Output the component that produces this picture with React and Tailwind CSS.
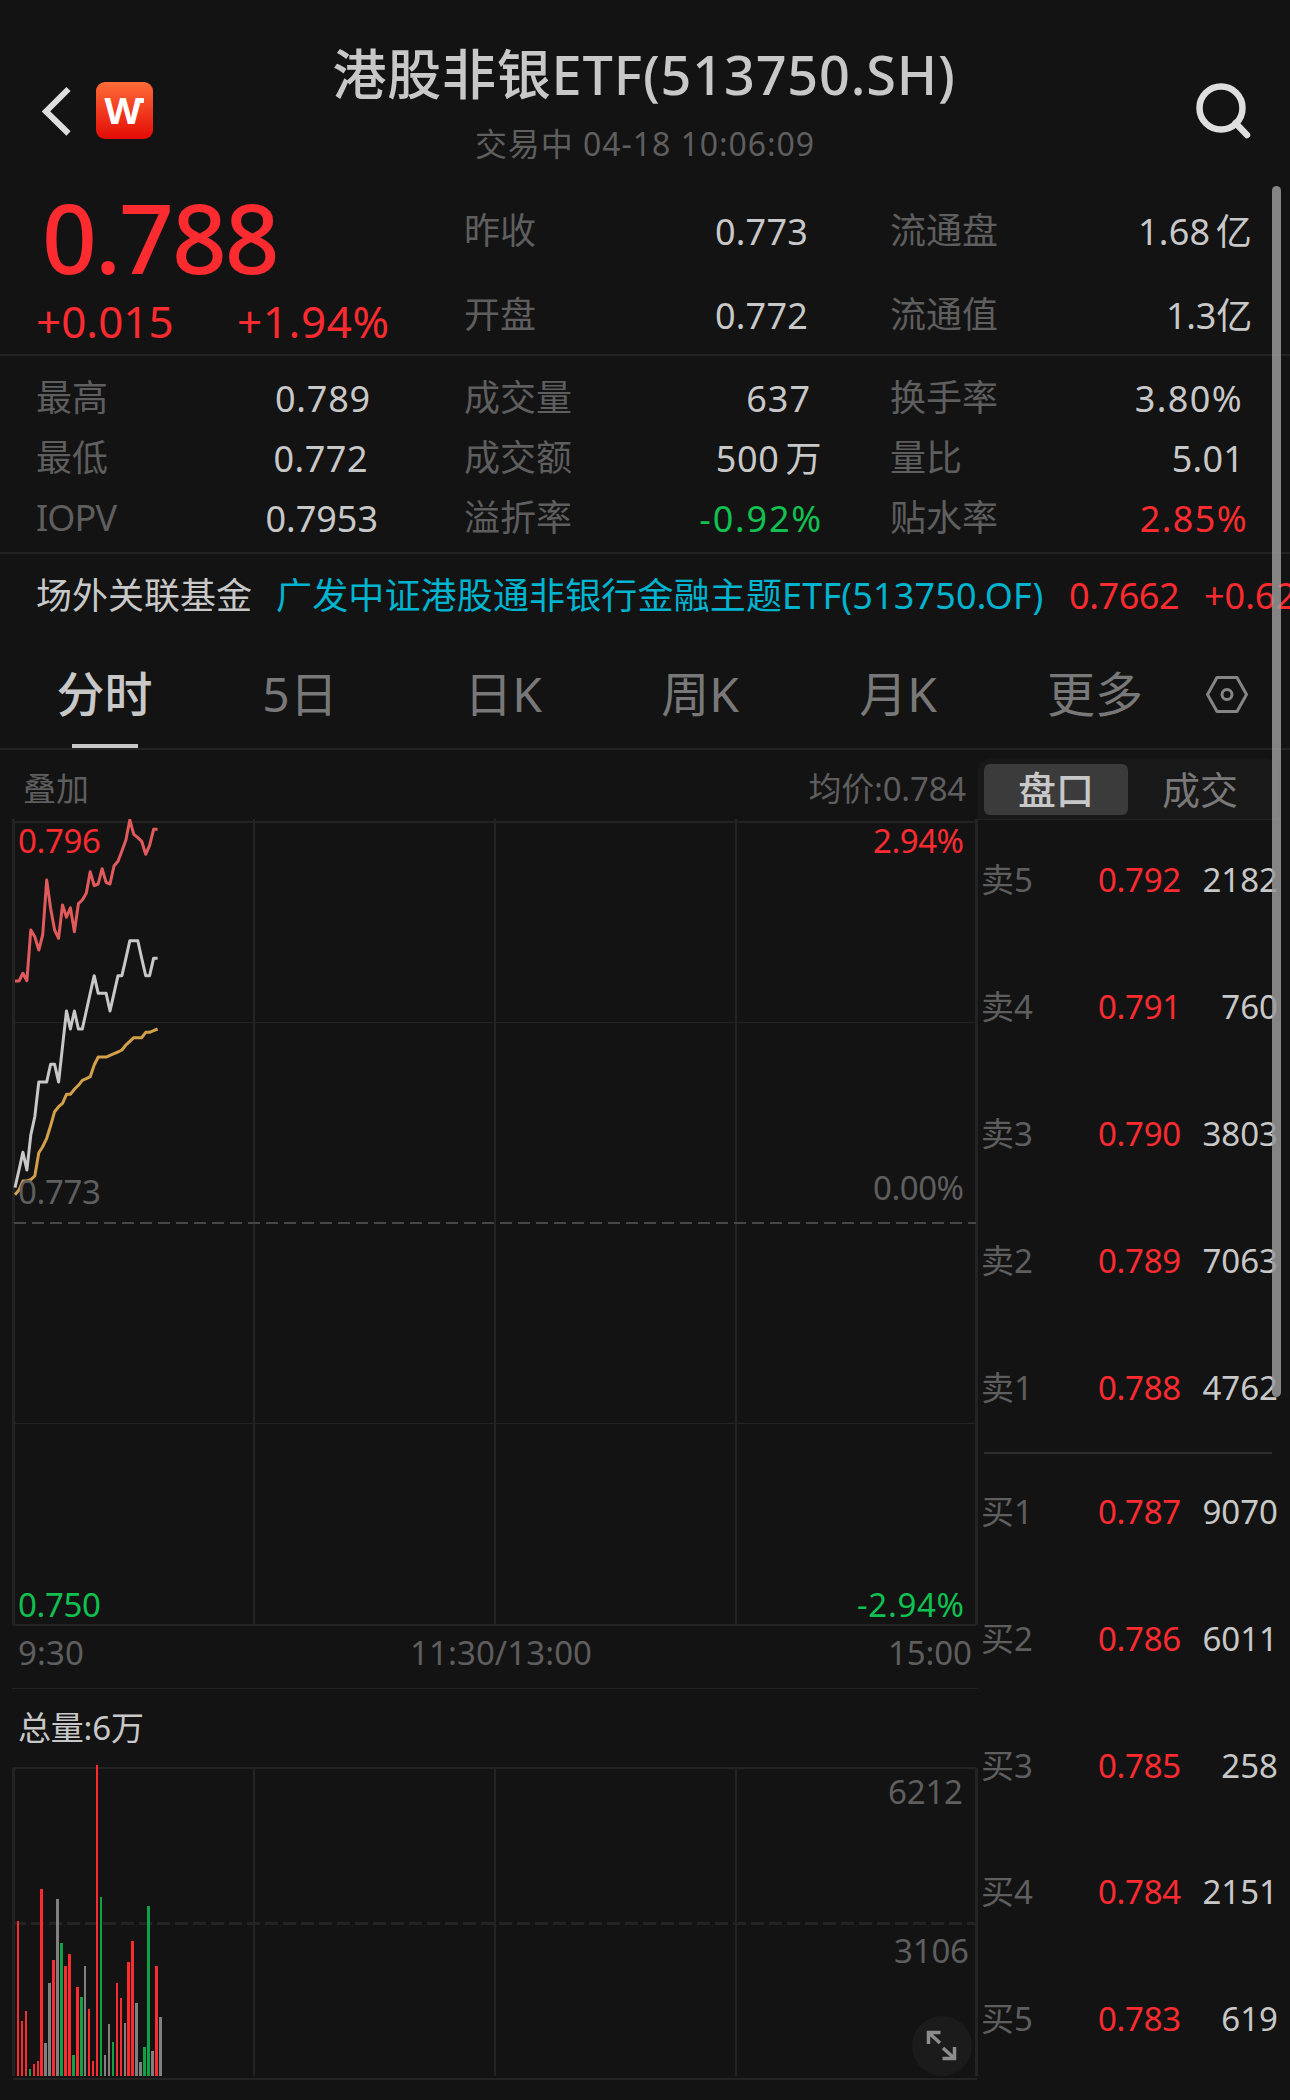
import { useState } from 'react';

const topStats = [
  { label: '昨收', value: '0.773', cls: 'pr-[82px] tracking-[0.2px]' },
  { label: '流通盘', value: '1.68 亿', cls: 'pr-[38px] tracking-[0.2px]' },
  { label: '开盘', value: '0.772', cls: 'pr-[82px] tracking-[0.2px]' },
  { label: '流通值', value: '1.3亿', cls: 'pr-[38px] tracking-[-0.2px]' },
];

const stats = [
  { label: '最高', value: '0.789', cls: 'pr-[93px] tracking-[0.8px]' },
  { label: '成交量', value: '637', cls: 'pr-[79px] tracking-[1px]' },
  { label: '换手率', value: '3.80%', cls: 'pr-[47px] tracking-[1.4px]' },
  { label: '最低', value: '0.772', cls: 'pr-[96px] tracking-[0.5px]' },
  { label: '成交额', value: '500 万', cls: 'pr-[68px] tracking-[0.6px]' },
  { label: '量比', value: '5.01', cls: 'pr-[46px] tracking-[0.2px]' },
  { label: 'IOPV', value: '0.7953', cls: 'pr-[86px]' },
  { label: '溢折率', value: '-0.92%', cls: 'pr-[67px] tracking-[1.8px]', color: 'text-[#10c050]' },
  { label: '贴水率', value: '2.85%', cls: 'pr-[42px] tracking-[1.4px]', color: 'text-[#fb2b30]' },
];

const tabs = [
  { name: '分时', cls: 'w-[209px]' },
  { name: '5日', cls: 'w-[182px]' },
  { name: '日K', cls: 'w-[224px]' },
  { name: '周K', cls: 'w-[170px]' },
  { name: '月K', cls: 'w-[226px]' },
  { name: '更多', cls: 'w-[168px]' },
];

const asks = [
  ['卖5', '0.792', 2182],
  ['卖4', '0.791', 760],
  ['卖3', '0.790', 3803],
  ['卖2', '0.789', 7063],
  ['卖1', '0.788', 4762],
];

const bids = [
  ['买1', '0.787', 9070],
  ['买2', '0.786', 6011],
  ['买3', '0.785', 258],
  ['买4', '0.784', 2151],
  ['买5', '0.783', 619],
];

// one sample per minute, y offsets from the top of the plot (1/3 px units)
const overlayLine = [
  486, 486, 463, 485, 333, 353, 393, 348, 183, 268, 333, 358, 258, 295, 266, 338, 254, 243, 223,
  158, 200, 195, 149, 190, 195, 141, 127, 96, 63, 3, 46, 56, 67, 106, 79, 31, 31,
];
const priceLine = [
  1106, 1053, 1000, 1053, 948, 893, 789, 789, 789, 736, 736, 789, 683, 576, 630, 576, 630, 630, 576,
  523, 470, 523, 523, 523, 576, 523, 470, 470, 418, 365, 365, 365, 418, 470, 470, 418, 418,
];
const avgLine = [
  1127, 1113, 1086, 1086, 1082, 1071, 1001, 983, 958, 920, 878, 863, 853, 826, 826, 811, 799, 784, 779,
  773, 738, 714, 714, 714, 709, 704, 699, 693, 678, 667, 656, 656, 656, 640, 640, 635, 630,
];

const RED = '#fb2b30';
const GREEN = '#12a047';
const GRAY = '#808080';

// x, width, height, colour
const volumes = [
  [17, 2, 155, RED], [21, 2, 55, RED], [25, 2, 65, RED], [29, 2, 7, GREEN], [33, 2, 12, RED],
  [37, 2, 15, RED], [40, 3, 187, RED], [44, 3, 33, GRAY], [48, 3, 93, GRAY], [52, 3, 116, RED],
  [56, 3, 177, GRAY], [60, 3, 133, GREEN], [64, 3, 110, RED], [68, 3, 122, RED], [72, 3, 21, GREEN],
  [76, 3, 89, RED], [80, 3, 79, GREEN], [84, 2, 110, GRAY], [88, 2, 67, RED], [92, 2, 15, RED],
  [96, 2, 311, RED], [100, 2, 179, GREEN], [104, 2, 21, GRAY], [108, 2, 52, GRAY], [112, 2, 34, GREEN],
  [116, 2, 93, RED], [120, 2, 78, RED], [124, 2, 53, GRAY], [127, 3, 114, RED], [131, 3, 135, RED],
  [135, 3, 73, GRAY], [139, 3, 14, GRAY], [143, 3, 29, GREEN], [147, 3, 170, GREEN], [151, 3, 25, GRAY],
  [155, 3, 110, RED], [159, 3, 59, GRAY],
];

const toPoints = (line) => line.map((y, i) => `${(15 + i * 3.96).toFixed(1)},${(819 + y / 3).toFixed(1)}`).join(' ');

function Header() {
  return (
    <header className="h-[186px] flex justify-between pl-[40px] pr-[38px]">
      <div className="w-[120px] flex items-center pt-[35px] h-[186px]">
        <svg className="w-[34px] h-[52px]" viewBox="40 85 34 52" fill="none" stroke="#dedede" strokeWidth="6">
          <path d="M68.500 89 L46 111.500 L68.500 133.500" />
        </svg>
        <svg className="ml-[22px] w-[57px] h-[57px]" viewBox="0 0 57 57">
          <defs>
            <linearGradient id="brand" x1="0" y1="0" x2="0" y2="1">
              <stop offset="0" stopColor="#ff6c38" />
              <stop offset="1" stopColor="#e30b06" />
            </linearGradient>
          </defs>
          <rect width="57" height="57" rx="9" fill="url(#brand)" />
          <text x="27" y="42" textAnchor="middle" textLength="37" lengthAdjust="spacingAndGlyphs" className="font-['Open_Sans'] font-bold text-[36px]" fill="#fff">W</text>
          <rect x="42" y="16" width="6" height="5" rx="1" fill="#fff" />
        </svg>
      </div>
      <div className="flex flex-col items-center">
        <h1 className="mt-[39px] -ml-[4px] h-[70px] leading-[70px] text-[54px] font-medium text-[#c8c8c8] whitespace-nowrap tracking-[0.8px]">港股非银ETF(513750.SH)</h1>
        <p className="mt-[13px] -ml-[2px] h-[44px] leading-[44px] text-[32px] text-[#5e5e5e] tracking-[0.95px]">交易中 04-18 10:06:09</p>
      </div>
      <div className="w-[120px] flex items-center justify-end pt-[34px] h-[186px]">
        <svg className="w-[58px] h-[58px]" viewBox="0 0 58 58" fill="none" stroke="#dedede" strokeWidth="6.500">
          <circle cx="27" cy="27" r="21.500" />
          <path d="M41.500 42 L53 54" strokeLinecap="round" />
        </svg>
      </div>
    </header>
  );
}

function Stat({ item }) {
  return (
    <div className={`flex items-center justify-between ${item.cls}`}>
      <span className={`text-[#5e5e5e] ${item.label === 'IOPV' ? 'tracking-[-0.9px]' : 'tracking-normal'}`}>{item.label}</span>
      <span className={`pt-[2px] whitespace-pre [word-spacing:-4px] ${item.color || 'text-[#c8c8c8]'}`}>{item.value}</span>
    </div>
  );
}

function Quote() {
  return (
    <section className="text-[36px] leading-[44px]">
      <div className="h-[168px] flex">
        <div className="w-[464px] text-[#fb2b30]">
          <div className="pl-[42px] mt-[1px] h-[100px] leading-[100px] text-[96px] font-medium tracking-[-2px]">0.788</div>
          <div className="pl-[36px] mt-[4px] h-[60px] leading-[60px] text-[44px] flex">
            <span className="w-[201px]">+0.015</span>
            <span className="tracking-[0.6px]">+1.94%</span>
          </div>
        </div>
        <div className="flex-1 pt-[3px] grid grid-cols-[426px_1fr] grid-rows-[84px_84px]">
          {topStats.map((item) => <Stat key={item.label} item={item} />)}
        </div>
      </div>
      <div className="h-[200px] border-y-2 border-[#222222] pl-[36px] pt-[12px] grid grid-cols-[428px_426px_1fr] grid-rows-[60px_60px_60px]">
        {stats.map((item) => <Stat key={item.label} item={item} />)}
      </div>
      <div className="h-[84px] leading-[84px] pl-[36px] flex overflow-hidden whitespace-nowrap text-[36px]">
        <span className="w-[240px] shrink-0 text-[#c8c8c8]">场外关联基金</span>
        <span className="w-[793px] shrink-0 text-[#00b4cf] tracking-[0.15px]">广发中证港股通非银行金融主题ETF(513750.OF)</span>
        <span className="w-[135px] shrink-0 text-[#fb2b30] tracking-[-0.4px]">0.7662</span>
        <span className="text-[#fb2b30]">+0.62%</span>
      </div>
    </section>
  );
}

function Tabs({ active, onChange }) {
  return (
    <nav className="h-[112px] border-b-2 border-[#222222] flex text-[48px]">
      {tabs.map((tab) => (
        <button
          key={tab.name}
          onClick={() => onChange(tab.name)}
          className={`${tab.cls} h-[110px] flex flex-col items-center justify-between whitespace-nowrap ${active === tab.name ? 'font-medium text-[#c8c8c8]' : 'text-[#787878]'}`}
        >
          <span className="leading-[112px] h-[106px]">{tab.name}</span>
          {active === tab.name && <span className="h-[4px] w-[66px] bg-[#c8c8c8]" />}
        </button>
      ))}
      <svg className="mt-[37px] ml-[26px] w-[44px] h-[40px]" viewBox="0 0 44 40" fill="none" stroke="#858585" strokeWidth="3">
        <path d="M12 2.500 H32 L41.500 19.500 L32 36.500 H12 L2.500 19.500 Z" strokeLinejoin="round" />
        <circle cx="22" cy="19.500" r="5" />
      </svg>
    </nav>
  );
}

function PriceChart() {
  return (
    <svg className="block w-[978px] h-[868px]" viewBox="0 819 978 868" fill="none">
      <g stroke="#232323">
        <path d="M13.500 819 V1625 M976.500 819 V1625" strokeWidth="3" />
        <path d="M254 819 V1625 M495 819 V1625 M736 819 V1625" strokeWidth="2" />
        <path d="M13 822 H976 M13 1625 H976" strokeWidth="2" />
        <path d="M15 1022.500 H976 M15 1423.500 H976" strokeWidth="1" />
      </g>
      <path d="M14 1223 H976" stroke="#464646" strokeWidth="2" strokeDasharray="12 6" />
      <g strokeWidth="3" strokeLinejoin="round">
        <polyline points={toPoints(avgLine)} stroke="#d3a04a" />
        <polyline points={toPoints(priceLine)} stroke="#c8c8c8" />
        <polyline points={toPoints(overlayLine)} stroke="#e15a5c" />
      </g>
      <g className="text-[33px]" fill="#5e5e5e">
        <text x="18" y="853" fill="#fb2b30" textLength="83">0.796</text>
        <text x="18" y="1204" textLength="83">0.773</text>
        <text x="18" y="1617" fill="#10c050" textLength="83">0.750</text>
        <text x="964" y="853" textAnchor="end" fill="#fb2b30" textLength="91">2.94%</text>
        <text x="964" y="1200" textAnchor="end" textLength="91">0.00%</text>
        <text x="964" y="1617" textAnchor="end" fill="#10c050" textLength="107">-2.94%</text>
        <text x="18" y="1665" textLength="66">9:30</text>
        <text x="410" y="1665" textLength="182">11:30/13:00</text>
        <text x="972" y="1665" textAnchor="end" textLength="84">15:00</text>
      </g>
    </svg>
  );
}

function VolumeChart() {
  return (
    <svg className="block w-[978px] h-[335px]" viewBox="0 1765 978 335" fill="none">
      <g stroke="#232323">
        <path d="M13.500 1768 V2076 M976.500 1768 V2076" strokeWidth="3" />
        <path d="M254 1768 V2076 M495 1768 V2076 M736 1768 V2076" strokeWidth="2" />
        <path d="M13 1768 H976 M13 2079 H977" strokeWidth="2" />
        <path d="M13 1923.500 H976" strokeWidth="3" strokeDasharray="13 5" />
      </g>
      {volumes.map(([x, w, h, color]) => (
        <rect key={x} x={x} y={2076 - h} width={w} height={h} fill={color} />
      ))}
      <g className="text-[33px]" fill="#5e5e5e">
        <text x="963" y="1804" textAnchor="end" textLength="75">6212</text>
        <text x="969" y="1963" textAnchor="end" textLength="75">3106</text>
      </g>
      <circle cx="942" cy="2046" r="30" fill="#1b1b1b" />
      <path d="M928.500 2044 V2032.500 H940.500 M928.500 2032.500 L940 2043 M943 2048 L954.500 2058.500 M954.500 2047 V2058.500 H942.500" stroke="#8c8c8c" strokeWidth="3.500" />
    </svg>
  );
}

function BookRow({ row }) {
  const [label, price, size] = row;
  return (
    <div className="h-[34px] leading-[34px] flex items-center whitespace-nowrap">
      <span className="w-[117px] text-[#5e5e5e]">{label}</span>
      <span className="text-[#fb2b30] tracking-[-0.3px]">{price}</span>
      <span className="ml-auto text-[#c8c8c8]">{size}</span>
    </div>
  );
}

function OrderBook() {
  const [view, setView] = useState('盘口');
  return (
    <aside className="w-[300px] text-[33px]">
      <div className="mt-[9px] h-[61px] px-[6px] flex items-center rounded-t-xl bg-[#181818] border-b border-[#232323]">
        {['盘口', '成交'].map((name) => (
          <button
            key={name}
            onClick={() => setView(name)}
            className={`h-[51px] w-[144px] leading-[50px] text-[38px] rounded-md ${view === name ? 'bg-[#3b3b3b] font-medium text-[#c8c8c8]' : 'text-[#787878]'}`}
          >
            {name}
          </button>
        ))}
      </div>
      <div className="h-[632px] pl-[3px] pt-[43px] pb-[47px] flex flex-col justify-between">
        {asks.map((row) => <BookRow key={row[0]} row={row} />)}
      </div>
      <div className="ml-[6px] mr-[6px] h-[2px] bg-[#2f2f2f]" />
      <div className="h-[646px] pl-[3px] pt-[41px] pb-[64px] flex flex-col justify-between">
        {bids.map((row) => <BookRow key={row[0]} row={row} />)}
      </div>
    </aside>
  );
}

export default function App() {
  const [tab, setTab] = useState('分时');
  return (
    <div className="relative w-[1290px] h-[2100px] overflow-hidden bg-[#131313] font-['Noto_Sans','Noto_Sans_CJK_SC',sans-serif]">
      <Header />
      <Quote />
      <Tabs active={tab} onChange={setTab} />
      <main className="flex">
        <div className="w-[978px]">
          <div className="h-[69px] pt-[8px] pl-[23px] pr-[12px] flex items-center justify-between text-[33px] text-[#5e5e5e]">
            <span>叠加</span>
            <span className="tracking-[-0.2px]">均价:0.784</span>
          </div>
          <PriceChart />
          <div className="ml-[12px] mt-px h-[77px] pl-[6px] border-t border-[#232323] leading-[78px] text-[33px] text-[#c8c8c8] tracking-[-0.2px]">总量:6万</div>
          <VolumeChart />
        </div>
        <OrderBook />
      </main>
      {/* page scrollbar */}
      <div className="absolute top-[186px] right-[9px] w-[9px] h-[1211px] rounded-full bg-[#999999]/85" />
    </div>
  );
}
